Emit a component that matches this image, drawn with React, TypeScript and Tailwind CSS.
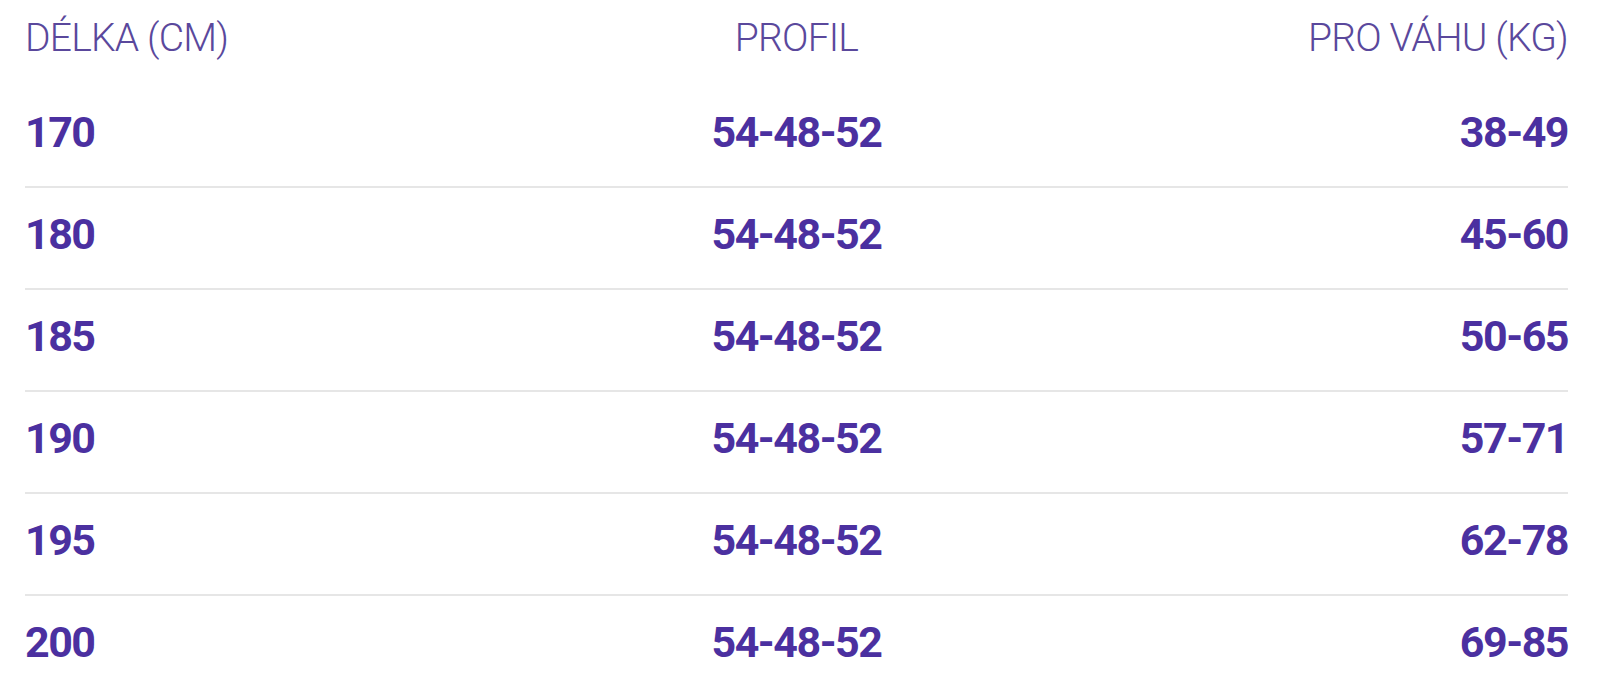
import React from "react";

const rows = [
  ["170", "54-48-52", "38-49"],
  ["180", "54-48-52", "45-60"],
  ["185", "54-48-52", "50-65"],
  ["190", "54-48-52", "57-71"],
  ["195", "54-48-52", "62-78"],
  ["200", "54-48-52", "69-85"],
];

export default function App() {
  return (
    <div className="w-[1600px] h-[695px] bg-white overflow-hidden">
      <div className="ml-[25px] w-[1543px]">
        <div
          className="grid grid-cols-3 pt-[19px] pb-[28px] text-[39px] leading-[39px] font-light tracking-[-0.8px] text-[#5a489c]"
          style={{ fontFamily: "Roboto, 'DejaVu Sans', sans-serif" }}
        >
          <div className="text-left">DÉLKA (CM)</div>
          <div className="text-center">PROFIL</div>
          <div className="text-right">PRO VÁHU (KG)</div>
        </div>
        {rows.map((r, i) => (
          <div
            key={i}
            className={
              "grid grid-cols-3 pt-[25px] pb-[32px] text-[43px] leading-[43px] font-bold tracking-[-1.5px] text-[#4b30a0] " +
              (i < rows.length - 1 ? "border-b-2 border-[#e6e6e6]" : "")
            }
            style={{ fontFamily: "Roboto, 'DejaVu Sans', sans-serif" }}
          >
            <div className="text-left">{r[0]}</div>
            <div className="text-center">{r[1]}</div>
            <div className="text-right">{r[2]}</div>
          </div>
        ))}
      </div>
    </div>
  );
}
